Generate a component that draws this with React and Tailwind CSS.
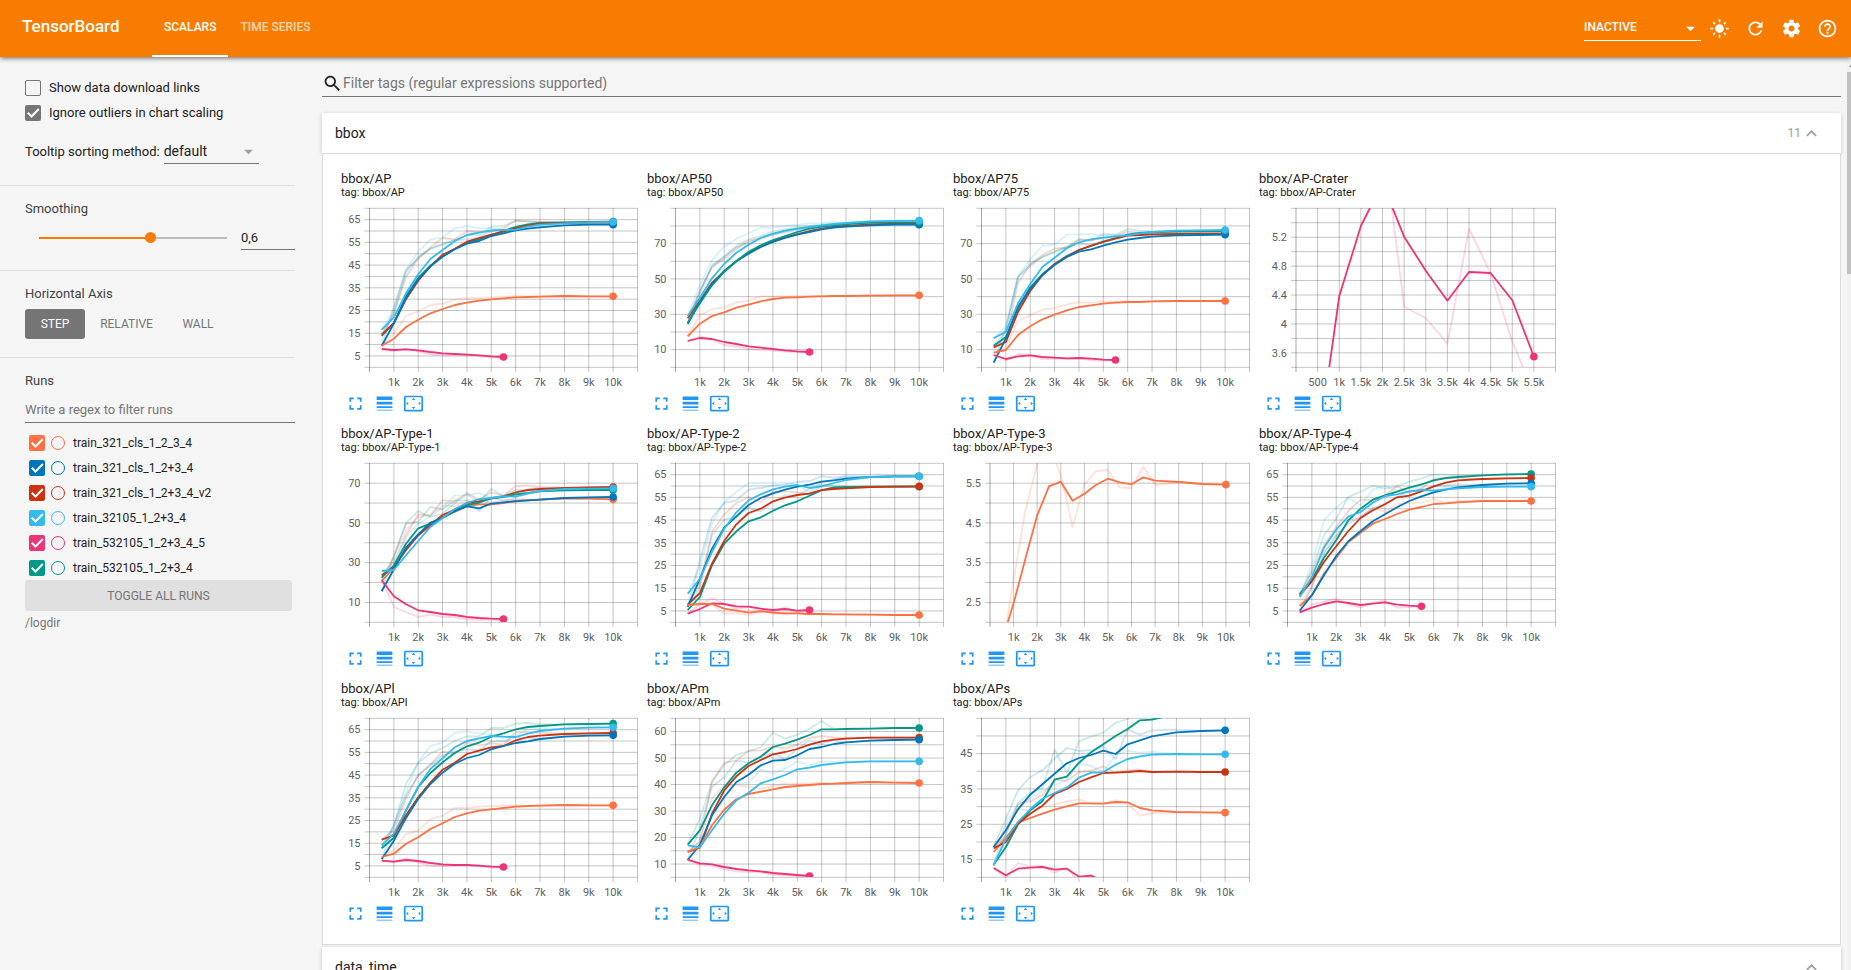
import React, { useId } from "react";

const COLORS = {
  orange: "#ff7043",
  blue: "#0077bb",
  red: "#cc3311",
  cyan: "#33bbee",
  magenta: "#ee3377",
  teal: "#009988",
};

const RUNS = [
  { name: "train_321_cls_1_2_3_4", box: "bg-[#ff7043]", ring: "border-[#ff7043]" },
  { name: "train_321_cls_1_2+3_4", box: "bg-[#0077bb]", ring: "border-[#0077bb]" },
  { name: "train_321_cls_1_2+3_4_v2", box: "bg-[#cc3311]", ring: "border-[#cc3311]" },
  { name: "train_32105_1_2+3_4", box: "bg-[#33bbee]", ring: "border-[#33bbee]" },
  { name: "train_532105_1_2+3_4_5", box: "bg-[#ee3377]", ring: "border-[#ee3377]" },
  { name: "train_532105_1_2+3_4", box: "bg-[#009988]", ring: "border-[#009988]" },
];

// Steps (in thousands) at which every series is sampled.
const STEPS = [0.5, 1, 1.5, 2, 2.5, 3, 3.5, 4, 4.5, 5, 5.5, 6, 6.5, 7, 8, 9, 10];

const K_TICKS = ["1k", "2k", "3k", "4k", "5k", "6k", "7k", "8k", "9k", "10k"].map((t, i) => [i + 1, t]);
const HALF_TICKS = ["500", "1k", "1.5k", "2k", "2.5k", "3k", "3.5k", "4k", "4.5k", "5k", "5.5k"].map((t, i) => [(i + 1) / 2, t]);

// Each series: colour, smoothed samples, raw samples. Samples are canvas rows, three to a pixel;
// `base` is the canvas row of the horizontal axis.
const CHARTS = [
  {
    tag: "bbox/AP", base: 621, y: [0, 70, 5], labels: [5, 15, 25, 35, 45, 55, 65],
    series: [
      ["teal", [528, 489, 408, 354, 317, 289, 267, 248, 238, 225, 213, 201, 193, 189, 187, 186, 185], [528, 460, 338, 290, 266, 252, 240, 226, 226, 200, 198, 182, 184, 186]],
      ["red", [524, 489, 418, 362, 319, 284, 266, 245, 234, 224, 215, 205, 197, 191, 189, 188, 188], [524, 460, 352, 295, 262, 234, 238, 214, 216, 214, 204, 182, 184, 186]],
      ["blue", [558, 490, 413, 358, 319, 290, 268, 251, 243, 228, 220, 211, 206, 202, 196, 194, 194], [558, 440, 330, 296, 266, 254, 240, 238, 232, 212, 210, 200, 200, 198]],
      ["orange", [557, 536, 501, 479, 460, 447, 435, 428, 422, 418, 415, 412, 411, 410, 408, 409, 409], [557, 520, 468, 454, 435, 430, 419, 415, 414, 412, 410, 408, 409, 409]],
      ["magenta", [567, 570, 568, 571, 576, 580, 582, 584, 586, 589, 591], [567, 573, 566, 575, 583, 586, 585, 586, 588, 592, 593]],
      ["cyan", [509, 472, 400, 343, 297, 270, 243, 225, 218, 211, 210, 209, 200, 194, 190, 187, 186], [509, 448, 330, 275, 238, 232, 205, 198, 205, 204, 212, 208, 192, 188]],
    ],
  },
  {
    tag: "bbox/AP50", base: 621, y: [0, 90, 10], labels: [10, 30, 50, 70],
    series: [
      ["red", [475, 422, 368, 334, 304, 278, 258, 243, 232, 222, 213, 206, 201, 198, 193, 191, 191], [475, 395, 322, 297, 267, 242, 236, 224, 214, 206, 204, 198, 196]],
      ["blue", [492, 425, 372, 333, 304, 281, 261, 246, 234, 224, 216, 208, 203, 200, 196, 194, 194], [492, 390, 320, 290, 262, 248, 232, 224, 216, 210, 202, 196, 194]],
      ["teal", [488, 430, 376, 336, 303, 275, 256, 240, 228, 216, 206, 200, 196, 192, 188, 187, 187], [488, 400, 315, 290, 258, 238, 228, 214, 208, 202, 198, 194, 192]],
      ["orange", [529, 491, 468, 457, 443, 434, 424, 417, 413, 412, 410, 409, 408, 408, 407, 406, 406], [529, 466, 447, 442, 427, 422, 409, 409, 409, 408, 408, 408]],
      ["magenta", [543, 534, 537, 546, 552, 559, 563, 567, 571, 574, 576], [543, 530, 539, 555, 560, 567, 569, 572, 575, 577, 578]],
      ["cyan", [468, 413, 355, 312, 278, 254, 234, 221, 212, 206, 201, 196, 192, 189, 184, 183, 182], [468, 375, 300, 260, 236, 220, 203, 203, 198, 195, 190, 190, 186]],
    ],
  },
  {
    tag: "bbox/AP75", base: 621, y: [0, 90, 10], labels: [10, 30, 50, 70],
    series: [
      ["teal", [557, 531, 445, 382, 343, 313, 288, 270, 258, 245, 234, 224, 219, 217, 215, 214, 214], [557, 515, 350, 310, 292, 275, 262, 236, 243, 222, 224, 207, 212, 214]],
      ["red", [562, 546, 456, 393, 346, 312, 290, 270, 257, 246, 236, 227, 225, 223, 222, 221, 221], [562, 540, 368, 314, 285, 266, 263, 240, 240, 234, 228, 214, 220, 222]],
      ["blue", [608, 535, 440, 387, 344, 315, 291, 275, 268, 257, 247, 239, 234, 230, 226, 225, 224], [608, 500, 352, 318, 290, 276, 260, 250, 256, 242, 234, 226, 226]],
      ["orange", [578, 570, 525, 499, 478, 464, 451, 441, 436, 431, 428, 426, 426, 424, 423, 423, 423], [578, 560, 484, 466, 449, 444, 433, 427, 428, 425, 424, 424]],
      ["magenta", [585, 597, 589, 586, 591, 593, 595, 594, 596, 599, 600], [585, 602, 582, 584, 598, 596, 597, 594, 600, 602, 601]],
      ["cyan", [535, 515, 430, 372, 321, 293, 265, 247, 238, 233, 229, 226, 220, 216, 212, 211, 210], [535, 500, 348, 298, 258, 254, 224, 223, 222, 226, 224, 222, 214]],
    ],
  },
  {
    tag: "bbox/AP-Crater", base: 621, y: [3.4, 5.6, 0.2], labels: [3.6, 4, 4.4, 4.8, 5.2], left: 37, xMax: 6, ticks: HALF_TICKS,
    series: [
      ["magenta", [870, 408, 198, 69, 230, 332, 422, 336, 339, 421, 590], [null, null, null, -80, 440, 474, 551, 206, 340, 545, 698]],
    ],
  },
  {
    tag: "bbox/AP-Type-1", base: 605, y: [0, 80, 10], labels: [10, 30, 50, 70],
    series: [
      ["orange", [482, 443, 385, 345, 316, 290, 275, 258, 252, 252, 248, 242, 240, 238, 234, 235, 237], [482, 410, 330, 290, 285, 255, 258, 240, 240, 246, 240, 234, 238]],
      ["red", [465, 440, 390, 345, 313, 284, 268, 248, 243, 235, 228, 216, 209, 206, 203, 201, 200], [465, 425, 345, 282, 285, 240, 243, 218, 238, 216, 226, 197, 196, 200]],
      ["teal", [472, 435, 370, 324, 310, 292, 273, 254, 247, 233, 230, 222, 218, 213, 210, 209, 209], [472, 410, 308, 272, 290, 280, 248, 222, 245, 205, 228, 208, 210, 210]],
      ["blue", [513, 447, 382, 342, 307, 293, 272, 258, 264, 250, 246, 243, 240, 238, 233, 231, 230], [513, 405, 310, 304, 260, 267, 240, 240, 272, 232, 240, 238]],
      ["magenta", [480, 528, 552, 570, 575, 581, 584, 590, 593, 595, 596], [480, 560, 575, 590, 583, 590, 590, 598, 597, 598, 599]],
      ["cyan", [452, 449, 405, 362, 320, 293, 266, 248, 236, 233, 228, 229, 220, 212, 206, 205, 204], [452, 442, 350, 310, 288, 262, 225, 225, 218, 232, 225, 230, 205, 202]],
    ],
  },
  {
    tag: "bbox/AP-Type-2", base: 605, y: [0, 70, 5], labels: [5, 15, 25, 35, 45, 55, 65],
    series: [
      ["teal", [569, 530, 435, 370, 333, 303, 291, 271, 255, 243, 226, 210, 201, 200, 199, 199, 199], [569, 500, 345, 298, 290, 262, 274, 245, 225, 225, 205, 192, 195, 198]],
      ["red", [553, 518, 430, 362, 312, 278, 265, 243, 232, 224, 220, 209, 206, 204, 200, 199, 198], [553, 490, 335, 282, 248, 230, 245, 214, 213, 216, 220, 196, 200]],
      ["blue", [560, 475, 385, 322, 288, 254, 233, 219, 208, 199, 193, 184, 180, 175, 170, 168, 168], [560, 420, 292, 248, 240, 208, 203, 195, 192, 185, 182, 168, 172, 170]],
      ["magenta", [580, 566, 549, 551, 558, 559, 565, 569, 566, 571, 569], [580, 552, 534, 550, 566, 560, 572, 574, 560, 576, 570]],
      ["orange", [554, 551, 551, 565, 571, 577, 573, 577, 579, 579, 581, 581, 582, 582, 583, 584, 584], [554, 548, 552, 580, 578, 585, 570, 580, 582, 578, 583, 582]],
      ["cyan", [520, 475, 395, 325, 276, 240, 222, 207, 199, 194, 203, 198, 188, 179, 170, 169, 168], [520, 440, 310, 245, 215, 188, 188, 188, 186, 195, 215, 185, 178, 165]],
    ],
  },
  {
    tag: "bbox/AP-Type-3", base: 605, y: [2, 6, 0.5], labels: [2.5, 3.5, 4.5, 5.5], left: 37,
    series: [
      ["orange", [665, 549, 415, 285, 198, 184, 241, 220, 193, 175, 186, 192, 171, 181, 185, 191, 193], [695, 478, 270, 132, 70, 165, 320, 192, 152, 149, 202, 203, 139, 194]],
    ],
  },
  {
    tag: "bbox/AP-Type-4", base: 605, y: [0, 70, 5], labels: [5, 15, 25, 35, 45, 55, 65],
    series: [
      ["orange", [557, 525, 460, 413, 365, 337, 310, 296, 281, 268, 260, 251, 249, 246, 242, 242, 242], [557, 500, 395, 350, 300, 290, 262, 275, 252, 248, 246, 236, 248, 242]],
      ["teal", [521, 478, 412, 360, 300, 265, 238, 225, 214, 202, 192, 180, 173, 170, 165, 162, 161], [521, 450, 345, 295, 230, 214, 196, 205, 198, 184, 174, 162, 163, 165]],
      ["red", [525, 483, 425, 378, 332, 293, 270, 252, 231, 226, 213, 198, 187, 180, 176, 174, 173], [525, 455, 375, 320, 272, 238, 240, 225, 198, 218, 205, 175, 172, 172]],
      ["blue", [571, 525, 465, 407, 363, 332, 303, 282, 261, 242, 228, 216, 208, 201, 194, 190, 189], [571, 500, 400, 345, 310, 290, 262, 250, 230, 212, 212, 198, 195, 192]],
      ["magenta", [576, 562, 551, 543, 548, 554, 550, 546, 553, 556, 558], [576, 552, 544, 535, 552, 562, 548, 541, 562, 560, 559]],
      ["cyan", [530, 470, 382, 328, 289, 275, 247, 227, 222, 213, 209, 211, 207, 204, 200, 199, 199], [530, 430, 300, 262, 232, 255, 208, 196, 212, 200, 204, 214, 200, 200]],
    ],
  },
  {
    tag: "bbox/APl", base: 605, y: [0, 70, 5], labels: [5, 15, 25, 35, 45, 55, 65],
    series: [
      ["teal", [519, 487, 405, 335, 293, 261, 233, 213, 202, 184, 174, 162, 155, 152, 147, 146, 145], [519, 450, 325, 262, 234, 218, 196, 183, 183, 158, 158, 145, 143, 147]],
      ["red", [493, 480, 420, 366, 322, 283, 262, 236, 226, 216, 212, 195, 185, 181, 176, 174, 173], [493, 465, 370, 300, 268, 228, 235, 202, 210, 204, 208, 170, 170, 172]],
      ["blue", [552, 496, 428, 371, 326, 292, 265, 248, 239, 222, 212, 203, 198, 191, 184, 181, 180], [552, 450, 360, 300, 270, 240, 228, 222, 225, 198, 198, 186, 188]],
      ["orange", [545, 535, 505, 486, 461, 444, 425, 414, 406, 402, 398, 394, 392, 391, 389, 390, 390], [545, 525, 476, 465, 432, 421, 398, 398, 394, 392, 391, 390]],
      ["magenta", [556, 559, 554, 557, 563, 567, 569, 569, 571, 574, 575], [556, 560, 548, 562, 571, 572, 571, 568, 574, 577, 576]],
      ["cyan", [510, 475, 405, 335, 281, 249, 216, 197, 189, 182, 184, 185, 175, 167, 160, 157, 156], [510, 450, 350, 260, 212, 202, 172, 168, 174, 176, 190, 180, 162, 160]],
    ],
  },
  {
    tag: "bbox/APm", base: 605, y: [5, 65, 5], labels: [10, 20, 30, 40, 50, 60],
    series: [
      ["teal", [508, 465, 390, 336, 292, 264, 244, 215, 205, 193, 179, 162, 162, 161, 160, 158, 158], [508, 430, 320, 270, 238, 228, 215, 172, 190, 178, 160, 137, 162, 160]],
      ["red", [530, 517, 415, 345, 303, 272, 254, 237, 230, 221, 208, 198, 193, 190, 187, 187, 187], [530, 500, 318, 262, 256, 226, 226, 214, 219, 208, 188, 182, 186, 187]],
      ["blue", [554, 508, 420, 365, 320, 298, 270, 256, 254, 240, 221, 215, 206, 201, 196, 194, 193], [554, 460, 335, 305, 256, 262, 242, 234, 252, 220, 195, 205, 194]],
      ["orange", [530, 515, 450, 403, 372, 356, 349, 342, 335, 332, 329, 326, 325, 323, 320, 322, 323], [530, 500, 370, 330, 330, 335, 340, 332, 325, 326, 324, 322]],
      ["magenta", [553, 564, 567, 575, 581, 585, 588, 593, 596, 599, 602], [553, 570, 570, 582, 588, 590, 591, 598, 600, 602, 604]],
      ["cyan", [510, 516, 465, 415, 375, 352, 324, 312, 299, 282, 277, 269, 265, 261, 258, 258, 258], [510, 520, 420, 350, 325, 322, 283, 295, 280, 258, 270, 258, 259, 258]],
    ],
  },
  {
    tag: "bbox/APs", base: 605, y: [10, 55, 5], labels: [15, 25, 35, 45],
    series: [
      ["orange", [530, 487, 442, 428, 415, 403, 393, 384, 384, 385, 380, 381, 398, 405, 410, 411, 412], [530, 450, 402, 405, 396, 387, 379, 372, 386, 384, 374, 383, 421, 413]],
      ["teal", [568, 515, 447, 405, 378, 313, 304, 262, 231, 207, 182, 161, 135, 133, 115, 105, 100], [568, 475, 383, 352, 340, 222, 292, 198, 184, 172, 142, 131, 100, 90]],
      ["red", [519, 500, 445, 415, 391, 356, 341, 320, 306, 293, 292, 290, 287, 290, 289, 290, 290], [519, 480, 385, 378, 360, 312, 317, 290, 286, 273, 292, 285, 282, 292]],
      ["blue", [515, 465, 402, 358, 327, 295, 264, 248, 239, 226, 236, 207, 195, 183, 171, 167, 165], [515, 430, 345, 305, 285, 250, 218, 227, 224, 214, 252, 163, 178, 165, 163]],
      ["magenta", [578, 600, 580, 577, 575, 583, 580, 604, 601, 618, 640], [578, 608, 563, 573, 572, 592, 578, 620, 598, 640, 650]],
      ["cyan", [570, 490, 440, 402, 370, 353, 337, 307, 292, 291, 268, 251, 243, 238, 236, 237, 237], [570, 440, 390, 370, 348, 330, 313, 264, 272, 290, 238, 227, 232, 230]],
    ],
  },
];

const PLOT_HEIGHT = 159;
const PLOT_RIGHT = 296.5;

function LineChart({ chart }) {
  const clip = useId();
  const { base, y, labels, series, left = 28.5, xMax = 11, ticks = K_TICKS } = chart;
  const [yMin, yMax, yStep] = y;
  const px = (k) => left + (k / xMax) * (PLOT_RIGHT - left);
  const py = (v) => PLOT_HEIGHT - ((v - yMin) / (yMax - yMin)) * PLOT_HEIGHT;
  const row = (r) => PLOT_HEIGHT - (base - r) / 3;
  const rows = Array.from({ length: Math.round((yMax - yMin) / yStep) + 1 }, (_, i) => yMin + i * yStep);
  const columns = [...ticks.map(([k]) => k), xMax];
  const points = (samples) =>
    samples
      .map((s, i) => (s === null ? null : `${px(STEPS[i]).toFixed(1)},${row(s).toFixed(1)}`))
      .filter(Boolean)
      .join(" ");

  return (
    <svg width="297" height="181" viewBox="0 0 297 181" className="mt-[9px] block overflow-visible" role="img" aria-label={chart.tag}>
      <clipPath id={clip}>
        <rect x={left} y="0" width={PLOT_RIGHT + 1 - left} height={PLOT_HEIGHT} />
      </clipPath>
      <g stroke="#000" strokeOpacity="0.23">
        {rows.map((v) => (
          <line key={v} x1={left - 5} x2={PLOT_RIGHT} y1={py(v) + 0.3} y2={py(v) + 0.3} />
        ))}
        {columns.map((k) => (
          <line key={k} x1={px(k)} x2={px(k)} y1="0" y2={PLOT_HEIGHT + 5} />
        ))}
        <line x1={left} x2={left} y1="0" y2={PLOT_HEIGHT + 5} strokeOpacity="0.35" />
      </g>
      <g clipPath={`url(#${clip})`} fill="none" strokeLinejoin="round">
        {series.map(([name, smooth, raw]) => (
          <polyline key={name} points={points([...raw, ...smooth.slice(raw.length)])} stroke={COLORS[name]} strokeOpacity="0.2" strokeWidth="1.8" />
        ))}
        {series.map(([name, smooth]) => (
          <polyline key={name} points={points(smooth)} stroke={COLORS[name]} strokeWidth="1.8" />
        ))}
        {series.map(([name, smooth]) => (
          <circle key={name} cx={px(STEPS[smooth.length - 1])} cy={row(smooth[smooth.length - 1])} r="3.8" fill={COLORS[name]} />
        ))}
      </g>
      <g fill="#616161" fontSize="11" fontFamily="Roboto, sans-serif">
        {labels.map((v) => (
          <text key={v} x={left - 9} y={py(v) + 4} textAnchor="end">{v}</text>
        ))}
        {ticks.map(([k, label]) => (
          <text key={label} x={px(k)} y="178" textAnchor="middle">{label}</text>
        ))}
      </g>
    </svg>
  );
}

function Icon({ d, className = "size-[21px]" }) {
  return (
    <svg viewBox="0 0 24 24" className={className} fill="currentColor" aria-hidden="true">
      <path d={d} />
    </svg>
  );
}

const ICONS = {
  fullscreen: "M7 14H5v5h5v-2H7v-3zm-2-4h2V7h3V5H5v5zm12 7h-3v2h5v-5h-2v3zM14 5v2h3v3h2V5h-5z",
  lineWeight: "M3 17h18v-2H3v2zm0 3h18v-1H3v1zm0-7h18v-3H3v3zm0-9v4h18V4H3z",
  overscan: "M12.01 5.5L10 8h4l-1.99-2.5zM18 10v4l2.5-1.99L18 10zM6 10l-2.5 2.01L6 14v-4zm8 6h-4l2.01 2.5L14 16zm7-13H3c-1.1 0-2 .9-2 2v14c0 1.1.9 2 2 2h18c1.1 0 2-.9 2-2V5c0-1.1-.9-2-2-2zm0 16.01H3V4.99h18v14.02z",
  search: "M15.5 14h-.79l-.28-.27C15.41 12.59 16 11.11 16 9.5 16 5.91 13.09 3 9.5 3S3 5.91 3 9.5 5.91 16 9.5 16c1.61 0 3.09-.59 4.23-1.57l.27.28v.79l5 4.99L20.49 19l-4.99-5zm-6 0C7.01 14 5 11.99 5 9.5S7.01 5 9.5 5 14 7.01 14 9.5 11.99 14 9.5 14z",
  expandLess: "M12 8l-6 6 1.41 1.41L12 10.83l4.59 4.58L18 14z",
  dropDown: "M7 10l5 5 5-5z",
  sun: "M12 7c-2.76 0-5 2.24-5 5s2.24 5 5 5 5-2.24 5-5-2.24-5-5-5zM2 13h2c.55 0 1-.45 1-1s-.45-1-1-1H2c-.55 0-1 .45-1 1s.45 1 1 1zm18 0h2c.55 0 1-.45 1-1s-.45-1-1-1h-2c-.55 0-1 .45-1 1s.45 1 1 1zM11 2v2c0 .55.45 1 1 1s1-.45 1-1V2c0-.55-.45-1-1-1s-1 .45-1 1zm0 18v2c0 .55.45 1 1 1s1-.45 1-1v-2c0-.55-.45-1-1-1s-1 .45-1 1zM5.99 4.58c-.39-.39-1.03-.39-1.41 0-.39.39-.39 1.03 0 1.41l1.06 1.06c.39.39 1.03.39 1.41 0s.39-1.03 0-1.41L5.99 4.58zm12.37 12.37c-.39-.39-1.03-.39-1.41 0-.39.39-.39 1.03 0 1.41l1.06 1.06c.39.39 1.03.39 1.41 0 .39-.39.39-1.03 0-1.41l-1.06-1.06zm1.06-10.96c.39-.39.39-1.03 0-1.41-.39-.39-1.03-.39-1.41 0l-1.06 1.06c-.39.39-.39 1.03 0 1.41s1.03.39 1.41 0l1.06-1.06zM7.05 18.36c.39-.39.39-1.03 0-1.41-.39-.39-1.03-.39-1.41 0l-1.06 1.06c-.39.39-.39 1.03 0 1.41s1.03.39 1.41 0l1.06-1.06z",
  refresh: "M17.65 6.35C16.2 4.9 14.21 4 12 4c-4.42 0-7.99 3.58-7.99 8s3.57 8 7.99 8c3.73 0 6.84-2.55 7.73-6h-2.08c-.82 2.33-3.04 4-5.65 4-3.31 0-6-2.69-6-6s2.69-6 6-6c1.66 0 3.14.69 4.22 1.78L13 11h7V4l-2.35 2.35z",
  settings: "M19.43 12.98c.04-.32.07-.64.07-.98s-.03-.66-.07-.98l2.11-1.65c.19-.15.24-.42.12-.64l-2-3.46c-.12-.22-.39-.3-.61-.22l-2.49 1c-.52-.4-1.08-.73-1.69-.98l-.38-2.65C14.46 2.18 14.25 2 14 2h-4c-.25 0-.46.18-.49.42l-.38 2.65c-.61.25-1.17.59-1.69.98l-2.49-1c-.23-.09-.49 0-.61.22l-2 3.46c-.13.22-.07.49.12.64l2.11 1.65c-.04.32-.07.65-.07.98s.03.66.07.98l-2.11 1.65c-.19.15-.24.42-.12.64l2 3.46c.12.22.39.3.61.22l2.49-1c.52.4 1.08.73 1.69.98l.38 2.65c.03.24.24.42.49.42h4c.25 0 .46-.18.49-.42l.38-2.65c.61-.25 1.17-.59 1.69-.98l2.49 1c.23.09.49 0 .61-.22l2-3.46c.12-.22.07-.49-.12-.64l-2.11-1.65zM12 15.5c-1.93 0-3.5-1.57-3.5-3.5s1.57-3.5 3.5-3.5 3.5 1.57 3.5 3.5-1.57 3.5-3.5 3.5z",
  help: "M11 18h2v-2h-2v2zm1-16C6.48 2 2 6.48 2 12s4.48 10 10 10 10-4.48 10-10S17.52 2 12 2zm0 18c-4.41 0-8-3.59-8-8s3.59-8 8-8 8 3.59 8 8-3.59 8-8 8zm0-14c-2.21 0-4 1.79-4 4h2c0-1.1.9-2 2-2s2 .9 2 2c0 2-3 1.75-3 5h2c0-2.25 3-2.5 3-5 0-2.21-1.79-4-4-4z",
};

function Header() {
  return (
    <header className="relative z-10 flex h-[57px] shrink-0 items-center bg-[#f77c00] pl-[22px] pr-[6px] text-white shadow-[0_1px_5px_rgba(0,0,0,0.6)]">
      <h1 className="w-[130px] pb-1 text-[17px] font-medium">TensorBoard</h1>
      <nav className="flex h-full text-[12px] font-medium">
        <a href="#scalars" className="flex items-center border-b-2 border-white px-3 pb-px">SCALARS</a>
        <a href="#timeseries" className="flex items-center border-b-2 border-transparent px-3 pb-px text-white/70">TIME SERIES</a>
      </nav>
      <div className="ml-auto flex items-center">
        <div className="grid w-[117px] items-center border-b border-white">
          <select aria-label="Inactive dashboards" className="col-start-1 row-start-1 h-6 w-full appearance-none bg-transparent pb-[2px] text-[12px] font-medium text-white outline-none">
            <option>INACTIVE</option>
          </select>
          <Icon d={ICONS.dropDown} className="pointer-events-none col-start-1 row-start-1 size-[21px] justify-self-end" />
        </div>
        <div className="flex">
          {[["Theme", "sun"], ["Reload", "refresh"], ["Settings", "settings"], ["Help", "help"]].map(([label, icon]) => (
            <button key={icon} aria-label={label} className="flex h-9 w-9 items-center justify-center">
              <Icon d={ICONS[icon]} />
            </button>
          ))}
        </div>
      </div>
    </header>
  );
}

function Check({ id, checked, fill }) {
  return (
    <span className="grid size-4 shrink-0 place-items-center">
      <input
        id={id}
        type="checkbox"
        defaultChecked={checked}
        className={`col-start-1 row-start-1 size-4 appearance-none rounded-[2px] ${checked ? fill : "border border-[#757575]"}`}
      />
      {checked && (
        <svg viewBox="0 0 16 16" className="pointer-events-none col-start-1 row-start-1 size-4" fill="none" stroke="#fff" strokeWidth="2" aria-hidden="true">
          <path d="M2.8 7.8 6.5 11.5 13.8 4" />
        </svg>
      )}
    </span>
  );
}

function Sidebar() {
  return (
    <aside className="w-[295px] shrink-0 text-[13px] text-[#212121]">
      <section className="border-b border-[#e0e0e0] pb-[21px] pl-[25px] pt-[18px]">
        <label htmlFor="download" className="flex h-[25px] items-center gap-2">
          <Check id="download" />
          Show data download links
        </label>
        <label htmlFor="outliers" className="flex h-[25px] items-center gap-2">
          <Check id="outliers" checked fill="bg-[#757575]" />
          Ignore outliers in chart scaling
        </label>
        <div className="mt-[14px] flex items-center gap-1">
          <label htmlFor="sorting">Tooltip sorting method:</label>
          <div className="grid w-[95px] items-center border-b border-[#757575]">
            <select id="sorting" className="col-start-1 row-start-1 h-6 w-full appearance-none bg-transparent text-[14px] outline-none">
              <option>default</option>
            </select>
            <Icon d={ICONS.dropDown} className="pointer-events-none col-start-1 row-start-1 size-[21px] justify-self-end text-[#9e9e9e]" />
          </div>
        </div>
      </section>

      <section className="border-b border-[#e0e0e0] pb-5 pl-[25px] pt-3">
        <h2 className="leading-[22px] text-[#424242]"><label htmlFor="smoothing">Smoothing</label></h2>
        <div className="mt-[5px] flex items-center gap-[14px] pl-[14px]">
          <input
            id="smoothing"
            type="range"
            min="0"
            max="1"
            step="0.1"
            defaultValue="0.6"
            className="h-[2px] w-[188px] appearance-none bg-[linear-gradient(to_right,#f77c00_60%,#bdbdbd_60%)] [&::-webkit-slider-thumb]:size-[11px] [&::-webkit-slider-thumb]:appearance-none [&::-webkit-slider-thumb]:rounded-full [&::-webkit-slider-thumb]:bg-[#f77c00]"
          />
          <input aria-label="Smoothing value" type="text" defaultValue="0,6" className="h-[25px] min-w-0 flex-1 border-b border-[#757575] bg-transparent outline-none" />
        </div>
      </section>

      <section className="border-b border-[#e0e0e0] pb-[18px] pl-[25px] pt-3">
        <h2 className="leading-[22px] text-[#424242]">Horizontal Axis</h2>
        <div className="mt-1 flex h-[30px] text-[12px] text-[#757575]">
          <button className="w-[60px] rounded-[3px] bg-[#757575] text-white">STEP</button>
          <button className="w-[83px]">RELATIVE</button>
          <button className="w-[60px]">WALL</button>
        </div>
      </section>

      <section className="pl-[25px] pt-3">
        <h2 className="leading-[22px] text-[#424242]">Runs</h2>
        <input aria-label="Filter runs" type="text" placeholder="Write a regex to filter runs" className="mt-[5px] h-[26px] w-full border-b border-[#757575] bg-transparent outline-none placeholder:text-[#757575]" />
        <ul className="mt-[7px]">
          {RUNS.map((run) => (
            <li key={run.name} className="flex h-[25px] items-center pl-1">
              <Check id={run.name} checked fill={run.box} />
              <input type="radio" name="isolate" aria-label={`Show only ${run.name}`} className={`ml-[6px] size-[14px] appearance-none rounded-full border ${run.ring}`} />
              <label htmlFor={run.name} className="ml-2 text-[12px]">{run.name}</label>
            </li>
          ))}
        </ul>
        <button className="block h-[31px] w-[267px] rounded-[3px] bg-[#e0e0e0] text-[12px] text-[#757575]">TOGGLE ALL RUNS</button>
        <p className="mt-1 text-[12px] leading-4 text-[#757575]">/logdir</p>
      </section>
    </aside>
  );
}

function ChartCard({ chart }) {
  return (
    <article className="w-[297px] text-[#212121]">
      <h3 className="text-[13px] leading-4">{chart.tag}</h3>
      <p className="text-[11px] leading-3">tag: {chart.tag}</p>
      <LineChart chart={chart} />
      <div className="flex text-[#2196f3]">
        <button aria-label="Fullscreen" className="p-1"><Icon d={ICONS.fullscreen} /></button>
        <button aria-label="Toggle log scale" className="p-1"><Icon d={ICONS.lineWeight} /></button>
        <button aria-label="Fit domain to data" className="p-1"><Icon d={ICONS.overscan} /></button>
      </div>
    </article>
  );
}

function SectionHeader({ name, count }) {
  return (
    <button className="flex h-10 w-full items-center bg-white pl-[13px] pr-[19px] text-left text-[#212121] shadow-[0_1px_4px_rgba(0,0,0,0.2)]">
      <span className="text-[14px]">{name}</span>
      <span className="ml-auto flex items-center text-[12px] text-[#9e9e9e]">
        {count}
        <Icon d={ICONS.expandLess} />
      </span>
    </button>
  );
}

export default function App() {
  return (
    <div className="flex h-screen flex-col overflow-hidden bg-[#f5f5f5] font-['Roboto',sans-serif]">
      <Header />
      <div className="flex min-h-0 flex-1">
        <Sidebar />
        <main className="ml-[27px] mr-[6px] min-w-0 flex-1">
          <div className="flex h-10 items-end border-b border-[#757575] pb-[2px]">
            <label htmlFor="tags" className="text-[#212121]"><Icon d={ICONS.search} /></label>
            <input id="tags" type="text" placeholder="Filter tags (regular expressions supported)" className="h-[21px] flex-1 bg-transparent text-[14px] outline-none placeholder:text-[#757575]" />
          </div>
          <section className="mt-4">
            <SectionHeader name="bbox" count="11" />
            <div className="flex flex-wrap gap-x-[9px] gap-y-2 border border-[#ddd] bg-white px-[18px] pb-4 pt-[17px]">
              {CHARTS.map((chart) => (
                <ChartCard key={chart.tag} chart={chart} />
              ))}
            </div>
          </section>
          <section className="mt-[2px]">
            <SectionHeader name="data_time" />
          </section>
        </main>
        <div className="flex w-1 shrink-0 flex-col overflow-hidden bg-[#f1f1f1]">
          <svg viewBox="0 0 4 15" className="h-[15px] w-1 shrink-0" fill="#757575" aria-hidden="true">
            <path d="M2 10h2V8z" />
          </svg>
          <div className="h-[202px] bg-[#c1c1c1]" />
        </div>
      </div>
    </div>
  );
}
